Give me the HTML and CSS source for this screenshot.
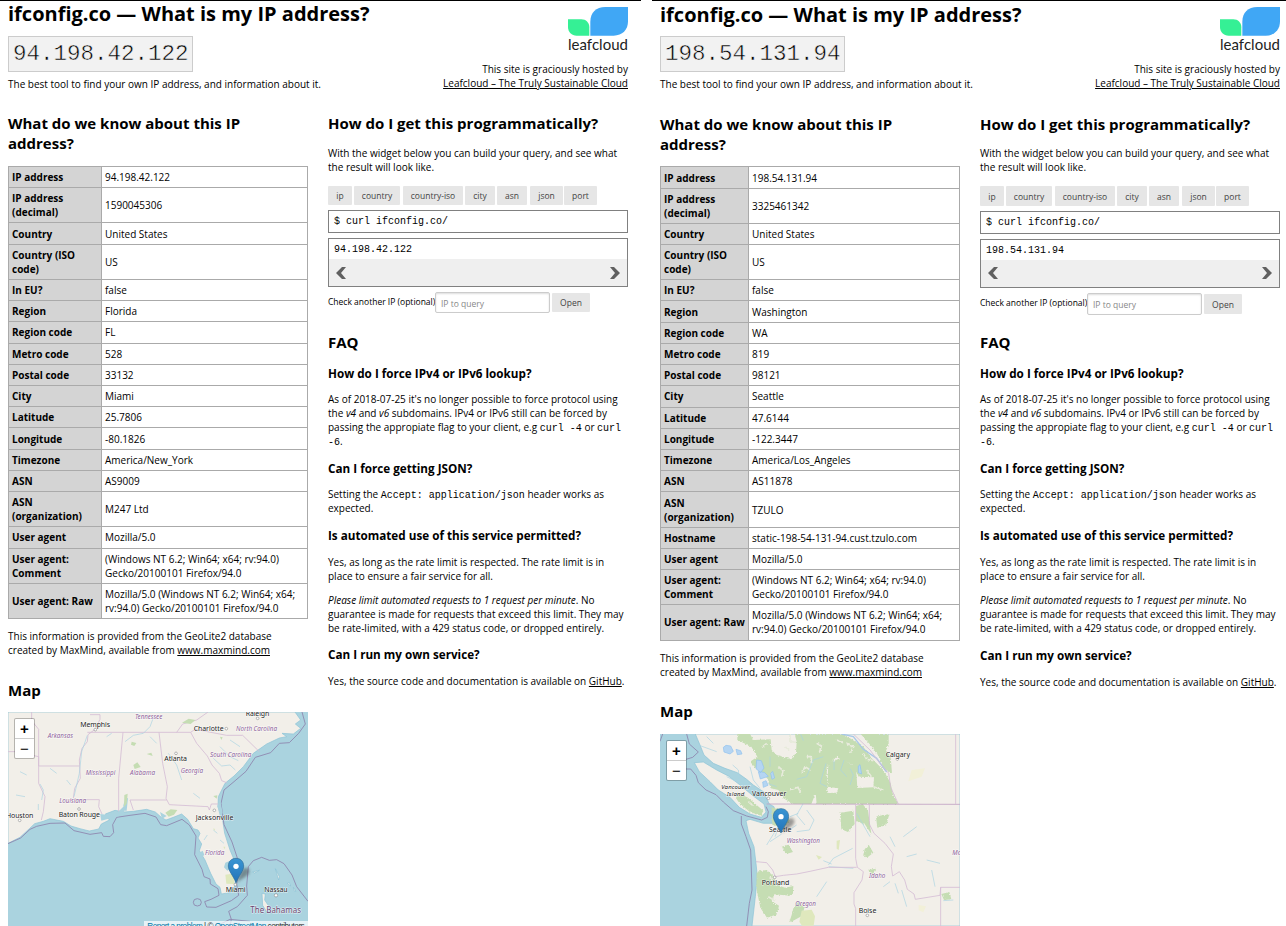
FILE: index.html
```html
<!DOCTYPE html>
<html lang="en">
<head>
<meta charset="utf-8">
<title>What is my IP address? — ifconfig.co</title>
<link rel="stylesheet" href="styles.css">
</head>
<body>
<svg class="defs" aria-hidden="true">
  <defs>
    <linearGradient id="pinfill" x1="0" y1="0" x2="0" y2="1"><stop offset="0" stop-color="#3a95d3"/><stop offset="1" stop-color="#2273b8"/></linearGradient>
    <filter id="soft" x="-50%" y="-50%" width="200%" height="200%"><feGaussianBlur stdDeviation="5"/></filter>
    <filter id="ragged" x="-5%" y="-5%" width="110%" height="110%"><feTurbulence type="fractalNoise" baseFrequency="0.2" numOctaves="2" seed="4"/><feDisplacementMap in="SourceGraphic" scale="9" xChannelSelector="R" yChannelSelector="G"/></filter>
    <symbol id="logo" viewBox="0 0 180 132">
      <path fill="#35f095" d="M0 37H40C54 37 64 47 64 61V86H26C11 86 0 75 0 60Z"/>
      <path fill="#40a7f5" d="M67 86V44C67 17 84 0 112 0H180V43C180 69 163 86 137 86Z"/>
      <text x="0" y="128" class="logo-word" textLength="180">leafcloud</text>
    </symbol>
    <symbol id="pin" viewBox="0 0 90 80" overflow="visible">
      <path d="M25 74L38 40C48 24 66 26 64 42C62 55 40 62 25 74Z" fill="#333" opacity=".45" filter="url(#soft)"/>
      <path d="M24 1C10 1 1 11 1 24C1 39 14 50 24 74C34 50 47 39 47 24C47 11 38 1 24 1Z" fill="url(#pinfill)" stroke="#2e6c97" stroke-width="2"/>
      <circle cx="24" cy="25" r="8" fill="#fff"/>
    </symbol>
  </defs>
</svg>
<main class="compare">
<section class="panel">
  <header class="top">
    <div class="intro">
      <h1>ifconfig.co — What is my IP address?</h1>
      <code class="ip">94.198.42.122</code>
      <p>The best tool to find your own IP address, and information about it.</p>
    </div>
    <div class="host">
      <svg class="logo"><use href="#logo"/></svg>
      <p>This site is graciously hosted by<br><a href="#">Leafcloud – The Truly Sustainable Cloud</a></p>
    </div>
  </header>
  <div class="columns">
    <div class="col">
      <h2>What do we know about this IP address?</h2>
      <table>
        <tr><th>IP address</th><td>94.198.42.122</td></tr>
        <tr><th>IP address (decimal)</th><td>1590045306</td></tr>
        <tr><th>Country</th><td>United States</td></tr>
        <tr><th>Country (ISO code)</th><td>US</td></tr>
        <tr><th>In EU?</th><td>false</td></tr>
        <tr><th>Region</th><td>Florida</td></tr>
        <tr><th>Region code</th><td>FL</td></tr>
        <tr><th>Metro code</th><td>528</td></tr>
        <tr><th>Postal code</th><td>33132</td></tr>
        <tr><th>City</th><td>Miami</td></tr>
        <tr><th>Latitude</th><td>25.7806</td></tr>
        <tr><th>Longitude</th><td>-80.1826</td></tr>
        <tr><th>Timezone</th><td>America/New_York</td></tr>
        <tr><th>ASN</th><td>AS9009</td></tr>
        <tr><th>ASN (organization)</th><td>M247 Ltd</td></tr>
        <tr><th>User agent</th><td>Mozilla/5.0</td></tr>
        <tr><th>User agent: Comment</th><td>(Windows NT 6.2; Win64; x64; rv:94.0) Gecko/20100101 Firefox/94.0</td></tr>
        <tr><th>User agent: Raw</th><td>Mozilla/5.0 (Windows NT 6.2; Win64; x64; rv:94.0) Gecko/20100101 Firefox/94.0</td></tr>
      </table>
      <p class="note">This information is provided from the GeoLite2 database created by MaxMind, available from <a href="#">www.maxmind.com</a></p>
      <h2 class="map-title">Map</h2>
      <div class="map">
        <svg viewBox="24 96 900 642">
          <path class="land" d="M24 490L60 472L88 446L104 431L130 424L150 416L190 424L213 438L240 446L268 453L296 447L304 432L328 420L316 402L345 391L372 396L400 394L440 388L466 396L485 413L498 420L520 412L545 402L563 418L580 446L594 450L600 460L594 474L605 492L598 512L615 540L632 580L648 612L660 622L664 642L688 638L703 623L708 590L707 550L690 510L674 460L668 420L654 380L655 350L675 310L702 288L730 260L760 220L800 192L838 174L860 170L846 160L880 162L902 145L886 132L902 120L885 96H24Z"/>
          <path class="border" d="M24 491L62 474L90 448L110 439L150 430L195 429L222 452L270 463L305 458L310 469L330 470L341 458L338 434L350 412L390 406L435 400L468 411L482 434L500 437L546 418L568 435L588 468L584 524L606 568L612 590L630 597L631 612L654 626L657 646L633 658L614 665L620 681L648 682L694 662L716 646L710 612L718 572L712 534L696 486L672 434L663 370L672 330L702 305L738 274L766 232L812 218L838 190L868 188L896 160L916 132L906 96M580 667a12 11 0 1 0 24 0a12 11 0 1 0-24 0M690 738L694 718L686 694L712 680L742 646L740 618L745 560L760 542L785 532L808 541L830 539L852 551L876 585L890 620L924 664M650 738L690 718L750 724"/>
          <path class="state" d="M95 96V122L116 148V258H238M24 215H45L116 230V310L135 350L130 395L124 420M270 104H300V118L285 148L264 164L262 185L246 205L238 240L241 295L224 325L220 355M220 359H298L296 380L306 402M262 157H572L585 148L680 166H728L778 215M369 157L356 295V398M477 157L488 250L502 320L498 355L508 374L624 380L628 390L634 372H654M390 360H500M390 360L400 390M572 157L590 190L622 228L636 255L658 280L665 302L680 308M530 157L548 132L590 120L624 96"/>
          <path class="river" d="M375 185L400 166L430 160L450 140L462 108M450 170L470 190M120 312L130 330L125 360M262 166L245 215L238 280L222 350M640 235L665 258L690 255L706 270M660 200L690 230L715 242M60 140L78 150M60 275L80 285M150 265L170 280M48 345L75 350M580 340L600 355M330 420L345 408L360 400M320 170L335 160M505 220L530 255L545 300M690 180L720 200M200 300L212 315M115 372V390M612 480L622 465M640 450L652 460M660 480L672 490M790 572L830 568L838 600M760 575L775 572M880 650L890 665M810 680L830 690M72 220L82 210"/>
          <path class="water" d="M676 548l14-6 12 8-6 14-14 8-10-10zM300 402l20 2 30-4 20-20 4 24-40 10-30 8zM480 396l20 12-14 8zM370 376l6-20 8-2-4 38h-10zM596 520l12-8 5 12-9 10zM652 378l8-20 8 40-6 20z"/>
          <path class="wood" d="M546 128l20-12 20 4-14 12zM395 185l14 4-6 9-10-4zM400 255l12-8 10 14-18 6zM496 398l16-10 20 2-10 14-16 6zM373 345l10-4-3 30-8 10zM660 170l8 2-4 8zM640 348l12-2-2 10zM440 222l14-4 4 10z"/>
          <path class="swamp" d="M676 584l20-3 8 6-2 25-23-1zM640 445l5 2-2 6zM670 500l6 0-2 8z"/>
          <path class="land" d="M786 640l10 2-2 18 12 18-2 24-16-26zM862 610l10 8-4-10zM880 622l8 12-6-2zM826 566l12 24-2 10zM758 576l20-5-14 8z"/>
          <g class="state-name">
            <text x="143" y="174" textLength="76">Arkansas</text><text x="405" y="118" textLength="82">Tennessee</text><text x="708" y="153" textLength="123">North Carolina</text><text x="630" y="232" textLength="124">South Carolina</text><text x="257" y="286" textLength="89">Mississippi</text><text x="390" y="285" textLength="75">Alabama</text><text x="542" y="280" textLength="67">Georgia</text><text x="178" y="368" textLength="80">Louisiana</text><text x="615" y="526" textLength="58">Florida</text><text class="country" x="751" y="698" textLength="152">The Bahamas</text>
          </g>
          <g class="dots"><circle cx="286" cy="149" r="4"/><circle cx="528" cy="220" r="4"/><circle cx="679" cy="146" r="4"/><circle cx="773" cy="115" r="4"/><circle cx="237" cy="387" r="4"/><circle cx="59" cy="421" r="4"/><circle cx="643" cy="391" r="4"/><circle cx="706" cy="614" r="4"/><circle cx="828" cy="646" r="5"/></g>
          <g class="city">
            <text x="241" y="141" textLength="89">Memphis</text><text x="581" y="153" textLength="90">Charlotte</text><text x="737" y="108" textLength="71">Raleigh</text><text x="493" y="243" textLength="68">Atlanta</text><text x="176" y="411" textLength="124">Baton Rouge</text><text x="18" y="414" textLength="82">Houston</text><text x="587" y="419" textLength="113">Jacksonville</text><text x="677" y="635" textLength="60">Miami</text><text x="793" y="635" textLength="70">Nassau</text>
          </g>
          <use href="#pin" x="684" y="534" width="90" height="80"/>
          <rect x="432" y="723" width="492" height="20" fill="#fff" opacity=".7"/>
          <text class="credit" x="442" y="747" textLength="472"><tspan class="link">Report a problem</tspan> | © <tspan class="link">OpenStreetMap</tspan> contributors</text>
        </svg>
        <div class="zoom"><span>+</span><span>−</span></div>
      </div>
    </div>
    <div class="col">
      <h2>How do I get this programmatically?</h2>
      <p class="lead">With the widget below you can build your query, and see what the result will look like.</p>
      <div class="buttons"><button class="w24">ip</button><button class="w46">country</button><button class="w60">country-iso</button><button class="w30">city</button><button class="w30">asn</button><button class="w33">json</button><button class="w33">port</button></div>
      <div class="command">$ curl ifconfig.co/</div>
      <div class="output"><div>94.198.42.122</div>
        <div class="scroll"><svg viewBox="0 0 10 12"><path d="M6 0H10L5 6L10 12H6L0 6Z"/></svg><svg viewBox="0 0 10 12"><path d="M4 0H0L5 6L0 12H4L10 6Z"/></svg></div></div>
      <div class="query"><label>Check another IP (optional)</label><input placeholder="IP to query"><button>Open</button></div>
      <h2 class="faq">FAQ</h2>
      <h3 class="q1">How do I force IPv4 or IPv6 lookup?</h3>
      <p>As of 2018-07-25 it's no longer possible to force protocol using the <i>v4</i> and <i>v6</i> subdomains. IPv4 or IPv6 still can be forced by passing the appropiate flag to your client, e.g <code>curl -4</code> or <code>curl</code><br><code>-6</code>.</p>
      <h3 class="q2">Can I force getting JSON?</h3>
      <p>Setting the <code>Accept: application/json</code> header works as expected.</p>
      <h3>Is automated use of this service permitted?</h3>
      <p>Yes, as long as the rate limit is respected. The rate limit is in place to ensure a fair service for all.</p>
      <p><i>Please limit automated requests to 1 request per minute</i>. No guarantee is made for requests that exceed this limit. They may be rate-limited, with a 429 status code, or dropped entirely.</p>
      <h3 class="last">Can I run my own service?</h3>
      <p>Yes, the source code and documentation is available on <a href="#">GitHub</a>.</p>
    </div>
  </div>
</section>
<section class="panel second">
  <header class="top">
    <div class="intro">
      <h1>ifconfig.co — What is my IP address?</h1>
      <code class="ip">198.54.131.94</code>
      <p>The best tool to find your own IP address, and information about it.</p>
    </div>
    <div class="host">
      <svg class="logo"><use href="#logo"/></svg>
      <p>This site is graciously hosted by<br><a href="#">Leafcloud – The Truly Sustainable Cloud</a></p>
    </div>
  </header>
  <div class="columns">
    <div class="col">
      <h2>What do we know about this IP address?</h2>
      <table>
        <tr><th>IP address</th><td>198.54.131.94</td></tr>
        <tr><th>IP address (decimal)</th><td>3325461342</td></tr>
        <tr><th>Country</th><td>United States</td></tr>
        <tr><th>Country (ISO code)</th><td>US</td></tr>
        <tr><th>In EU?</th><td>false</td></tr>
        <tr><th>Region</th><td>Washington</td></tr>
        <tr><th>Region code</th><td>WA</td></tr>
        <tr><th>Metro code</th><td>819</td></tr>
        <tr><th>Postal code</th><td>98121</td></tr>
        <tr><th>City</th><td>Seattle</td></tr>
        <tr><th>Latitude</th><td>47.6144</td></tr>
        <tr><th>Longitude</th><td>-122.3447</td></tr>
        <tr><th>Timezone</th><td>America/Los_Angeles</td></tr>
        <tr><th>ASN</th><td>AS11878</td></tr>
        <tr><th>ASN (organization)</th><td>TZULO</td></tr>
        <tr><th>Hostname</th><td>static-198-54-131-94.cust.tzulo.com</td></tr>
        <tr><th>User agent</th><td>Mozilla/5.0</td></tr>
        <tr><th>User agent: Comment</th><td>(Windows NT 6.2; Win64; x64; rv:94.0) Gecko/20100101 Firefox/94.0</td></tr>
        <tr><th>User agent: Raw</th><td>Mozilla/5.0 (Windows NT 6.2; Win64; x64; rv:94.0) Gecko/20100101 Firefox/94.0</td></tr>
      </table>
      <p class="note">This information is provided from the GeoLite2 database created by MaxMind, available from <a href="#">www.maxmind.com</a></p>
      <h2 class="map-title">Map</h2>
      <div class="map">
        <svg viewBox="30 132 900 576">
          <path class="land" d="M136 132L150 165L162 195L190 220L225 235L262 248L290 268L310 285L340 305L352 330L358 342L372 350L380 385L372 400L340 400L300 388L288 392L296 430L312 470L318 520L322 560L316 620L306 708H930V132Z"/>
          <path class="land" d="M133 218L160 216L200 240L235 258L270 285L310 318L342 342L348 366L334 382L300 372L268 352L240 322L205 300L180 275L148 245Z"/>
          <g filter="url(#ragged)">
          <path class="wood" d="M262 132H300L310 150L362 148L365 180L380 195L424 208L438 188L440 155L434 132H580L600 145L640 170L665 205L700 240L722 280L728 310L745 342H500L497 310L560 308L565 295L532 290L535 220L570 205L618 230L622 294L670 292L672 262L626 260L610 225L560 200L530 230L532 310L496 312L484 342H430L400 325L385 300L362 295L350 260L318 235L300 215L322 200L304 170L262 150ZM632 132H716V165L708 182L722 200L726 250L700 235L690 205L670 175ZM262 310L292 322L320 345L340 362L335 378L300 366L270 342L258 325ZM365 352l40 10 14 30-18 22-34-10zM320 545l30-5 20 18 5 25 30 10 25-5-2 30-55-5-8 20 22 14-8 28-28 8-20-30-12-60zM430 655l15-20 18 18-6 24-40 22 8-24zM570 368l40-6 4 40-20 24-20-8zM618 348l20-6 16 20 10 70-20-30-26-8zM678 380l40-8-8 30-28 12zM644 478l12-14 14 24-20 16-10-10zM395 470l20-6 14 22-20 6zM655 540l22-4-10 18zM874 612l24-6 6 22-22 2z"/>
          <path class="woodgap" d="M420 132v22l20 4M470 200h14v20M500 160l14 8-6 20M455 250l10-20 16 10M590 160l20 12-10 16M560 150l20 8M640 190l10 18 20 4M650 240l14 20M700 300l-30-10M385 230l14 12-4 18M420 300l24-8 10 20M350 160l-14 12M405 170l14 10M295 335l12 10M360 560l10 20M355 620l20 12"/>
          </g>
          <path class="swamp" d="M455 662l30-3 10 20-4 28H456l-8-12zM498 495l18 6-10 8zM560 452l10-2-4 30-6-4z"/>
          <path class="swamp pale" d="M806 645l22 4-8 18-14-6zM785 240l40-5-10 25-40 14z"/>
          <path class="water strong" d="M220 172l8-6 14 2 8 16-10 8-18-6zM320 210l14 2 8 22-10 14-14-12zM325 245l18 2 12 12-24 8zM338 276l10-4 6 14-14 6zM258 178l14 4 4 10-14 2zM625 228l5-4 5 28-10-4zM362 250l6-6 6 20-8 4z"/>
          <path class="river" d="M145 165L200 185M170 140L190 160M248 225L265 240L268 270M300 230L310 270L330 295M352 280L380 290M360 200V230M440 268L470 260L490 210L520 200M452 132L460 152M530 290L510 280L528 220M552 212V240M582 210L572 240L590 260M600 235L610 255L600 285M460 340L440 375L465 405M470 360L492 390L478 420L440 425M535 525L550 505L608 475M536 530L610 535M520 512L545 522M660 440L620 370M720 440L735 470M760 440L800 410M830 510L870 520M845 540L855 590M375 440L390 400M360 455L395 432M350 465L384 410M770 500L800 492M410 425L440 405M530 575L500 620M735 580L745 610M755 600L770 650M420 380L445 370M880 632L910 630M230 260L270 280M700 590L720 575"/>
          <path class="river rocky" d="M575 132L610 140L640 178L680 205L710 246"/>
          <path class="border" d="M30 154L38 132M110 132L118 162L145 186L128 202L108 208M108 237H122L138 256L145 278L168 300L198 314L220 336L250 362L290 378L335 390L352 382L355 365L348 350M274 378V402L288 440L302 480L304 540L306 600L298 640L290 708"/>
          <path class="border soft" d="M350 342L930 343"/>
          <path class="state" d="M617 343V505L622 532L640 545L636 570L612 608V642L617 656V708M658 343V402L672 430L705 460L730 492L724 530L728 558L748 545L764 570L772 598L792 612L796 628L870 616L872 592H930M872 592V708M318 515L350 518L368 540L376 560L400 556L440 552L480 544L535 532H620M610 132L660 180L690 220L716 250L722 292L745 342M917 132V342"/>
          <g class="state-name"><text x="410" y="459" textLength="100">Washington</text><text x="436" y="649" textLength="62">Oregon</text><text x="657" y="563" textLength="49">Idaho</text><text x="907" y="494">Montana</text></g>
          <g class="island"><text x="214" y="298" textLength="86">Vancouver</text><text x="230" y="319" textLength="53">Island</text></g>
          <g class="dots"><circle cx="355" cy="325" r="4"/><circle cx="742" cy="207" r="4"/><circle cx="374" cy="562" r="4"/><circle cx="652" cy="676" r="4"/></g>
          <g class="city"><text x="707" y="200" textLength="73">Calgary</text><text x="306" y="319" textLength="103">Vancouver</text><text x="357" y="425" textLength="67">Seattle</text><text x="335" y="585" textLength="83">Portland</text><text x="626" y="669" textLength="53">Boise</text></g>
          <use href="#pin" x="369" y="355" width="90" height="80"/>
        </svg>
        <div class="zoom"><span>+</span><span>−</span></div>
      </div>
    </div>
    <div class="col">
      <h2>How do I get this programmatically?</h2>
      <p class="lead">With the widget below you can build your query, and see what the result will look like.</p>
      <div class="buttons"><button class="w24">ip</button><button class="w46">country</button><button class="w60">country-iso</button><button class="w30">city</button><button class="w30">asn</button><button class="w33">json</button><button class="w33">port</button></div>
      <div class="command">$ curl ifconfig.co/</div>
      <div class="output"><div>198.54.131.94</div>
        <div class="scroll"><svg viewBox="0 0 10 12"><path d="M6 0H10L5 6L10 12H6L0 6Z"/></svg><svg viewBox="0 0 10 12"><path d="M4 0H0L5 6L0 12H4L10 6Z"/></svg></div></div>
      <div class="query"><label>Check another IP (optional)</label><input placeholder="IP to query"><button>Open</button></div>
      <h2 class="faq">FAQ</h2>
      <h3 class="q1">How do I force IPv4 or IPv6 lookup?</h3>
      <p>As of 2018-07-25 it's no longer possible to force protocol using the <i>v4</i> and <i>v6</i> subdomains. IPv4 or IPv6 still can be forced by passing the appropiate flag to your client, e.g <code>curl -4</code> or <code>curl</code><br><code>-6</code>.</p>
      <h3 class="q2">Can I force getting JSON?</h3>
      <p>Setting the <code>Accept: application/json</code> header works as expected.</p>
      <h3>Is automated use of this service permitted?</h3>
      <p>Yes, as long as the rate limit is respected. The rate limit is in place to ensure a fair service for all.</p>
      <p><i>Please limit automated requests to 1 request per minute</i>. No guarantee is made for requests that exceed this limit. They may be rate-limited, with a 429 status code, or dropped entirely.</p>
      <h3 class="last">Can I run my own service?</h3>
      <p>Yes, the source code and documentation is available on <a href="#">GitHub</a>.</p>
    </div>
  </div>
</section>
</main>
</body>
</html>
```

FILE: styles.css
```css
* { box-sizing: border-box; }
body { margin: 0; background: #fff; color: #000; font: 10px/14px "Open Sans", sans-serif; overflow: hidden; }
h1, h2, h3, p { margin: 0; }
a { color: #000; text-decoration: underline; }
.defs { position: absolute; width: 0; height: 0; }

.compare { display: flex; height: 926px; overflow: hidden; }
.panel { width: 641px; border-top: 1px solid #000; padding: 0 8px; flex: none; }
.second { width: 634px; margin-left: 11px; padding-right: 6px; }

.top { display: flex; justify-content: space-between; width: 620px; height: 112px; }
h1 { font-size: 20px; line-height: 28px; height: 35px; margin-top: -2px; }
.second h1 { padding-top: 1px; }
.intro { padding-top: 1px; }
.intro p { margin-top: 5px; }
.ip { display: block; width: 185px; height: 36px; margin-top: 1px; border: 1px solid #ccc; background: #f2f2f2; padding-left: 4px; font: 22.5px/34px "Liberation Mono", monospace; color: #000; -webkit-text-stroke: .5px #f2f2f2; }
.host { text-align: right; padding-top: 6px; }
.logo { display: block; width: 60px; height: 44px; margin: 0 0 11px auto; }
.logo-word { font: 400 45px Lato, sans-serif; fill: #222; }

.columns { display: flex; gap: 20px; width: 620px; }
.col { width: 300px; }
h2 { font-size: 15px; line-height: 20px; }
.second .columns h2 { position: relative; top: 1px; }
table { width: 300px; margin-top: 13px; border-collapse: collapse; table-layout: fixed; }
.second table { margin-top: 13.4px; }
th, td { border: 1px solid #aaa; padding: 3.11px 3px; text-align: left; vertical-align: middle; }
th { width: 93px; background: #d4d4d4; }
.second th { width: 88px; padding-right: 1px; }
td { padding-right: 2px; }
.note { margin-top: 10px; }
.second .note { margin-top: 10.6px; }
.map-title { margin-top: 23px; }
.map { position: relative; margin-top: 12px; height: 214px; overflow: hidden; background: #aad3df; }
.second .map { height: 192px; }
.second .map-title { margin-top: 21px; }
.second .columns .map-title + .map { margin-top: 14px; }
.map > svg { display: block; width: 300px; height: 100%; }

.buttons { display: flex; height: 19px; margin-top: 12px; }
button { border: 0; border-radius: 1px; background: #e6e6e6; color: #444; font: 8.5px/19px "Open Sans", sans-serif; padding: 0; margin: 0 2px 0 0; text-align: center; height: 19px; }
.second .buttons, .second button { height: 20px; }
.w24 { width: 24px; }
.w46 { width: 46px; margin-right: 3px; }
.w60 { width: 60px; }
.w30 { width: 30px; }
.w30 + .w30 { margin-right: 3px; }
.w33 { width: 33px; }
.w33 + .w33 { margin-left: -1px; }
.command, .output { border: 1px solid #808080; font: 10px/22px "Liberation Mono", monospace; }
.command { height: 23px; margin-top: 5px; padding-left: 5px; }
.output { height: 49px; margin-top: 5px; display: flex; flex-direction: column; }
.output > div:first-child { padding-left: 5px; flex: 1; height: 20px; }
.scroll { background: #efefef; height: 27px; display: flex; flex: none; justify-content: space-between; padding: 7px 7px 0; }
.scroll svg { width: 10px; height: 12px; fill: #606060; }
.panel:not(.second) .scroll { padding-top: 8px; }
.query { display: flex; height: 21px; margin-top: 5px; font-size: 8.5px; line-height: 20px; }
.query label { width: 107px; white-space: nowrap; }
input { width: 115px; height: 21px; border: 1px solid #ccc; border-radius: 2px; box-shadow: inset 0 1px 2px #ddd; margin: 0 2px 0 0; padding: 1px 5px 0; font: 8.5px "Open Sans", sans-serif; }
input::placeholder { color: #888; }
.query button { width: 38px; margin-top: 1px; }
.second .query, .second input { height: 22px; }
.lead { margin-top: 13px; }
.faq { margin-top: 19px; }
.second .faq { margin-top: 17px; }
.second .columns .faq { top: 0; }
h3 { font-size: 11.7px; line-height: 16px; margin: 12px 0; }
.q1 { margin: 13px 0 11px; }
.q2 { margin-bottom: 11px; }
.col p + p { margin-top: 10px; }
.last { margin-top: 11px; }
.second .last, .second .last + p { position: relative; top: 1px; }
p code { font: 10px/1 "Liberation Mono", monospace; }

.zoom { position: absolute; left: 6px; top: 6px; width: 21px; border: 1px solid rgba(0, 0, 0, .25); border-radius: 2px; background: #fff; background-clip: padding-box; }
.zoom span { display: block; height: 19px; text-align: center; font: bold 15px/20px "Liberation Sans", sans-serif; }
.zoom span + span { height: 20px; border-top: 1px solid #ccc; font-weight: 400; }
.land { fill: #f2efe9; stroke: #8bc3d6; stroke-width: 2; }
.water { fill: #aad3df; }
.strong { fill: #b5d5f2; stroke: #8fc1ee; stroke-width: 2; }
.wood { fill: #c5ddb3; }
.woodgap { fill: none; stroke: #e8ebdc; stroke-width: 5; }
.swamp { fill: #dfe8bd; }
.pale { fill: #f2f0d8; }
.border { fill: none; stroke: #8d84ad; stroke-width: 3; stroke-linejoin: round; opacity: .85; }
.soft { stroke: #c2a3c4; }
.state { fill: none; stroke: #d5bdd5; stroke-width: 2.5; stroke-linejoin: round; }
.river { fill: none; stroke: #a9d3e2; stroke-width: 2; }
.rocky { stroke: #a8c8e8; stroke-width: 4; }
.state-name, .city, .island { font: 21px "Noto Sans", sans-serif; paint-order: stroke; stroke: #fff; stroke-opacity: .7; stroke-width: 3px; }
.state-name { font-size: 19px; font-style: italic; fill: #8d6198; }
.state-name .country { font-size: 24px; font-style: normal; fill: #69456f; }
.city { fill: #222; }
.island { font-size: 18.5px; font-style: italic; fill: #222; }
.dots { fill: #fff; stroke: #777; stroke-width: 1.5; }
.credit { font: 24.5px "Liberation Sans", sans-serif; fill: #333; }
.link { fill: #0078a8; }
```
